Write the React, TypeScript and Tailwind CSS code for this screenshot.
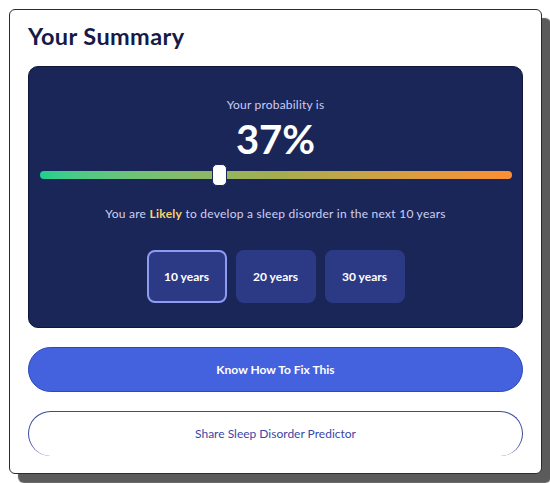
import { useState } from 'react'

const periods = ['10 years', '20 years', '30 years']

export default function App() {
  const [period, setPeriod] = useState('10 years')
  const probability = 37

  return (
    <div className="w-[550px] h-[483px] bg-white font-['Lato','Noto_Sans',sans-serif]">
      <div className="absolute left-[9px] top-[9px] w-[533px] h-[465px] rounded-[6px] border border-[#2b2b2b] bg-white shadow-[9px_9px_1px_#5b5b5b] px-[18px] pt-[12px]">
        <h1 className="text-[23.5px] leading-[28px] font-bold text-[#151a47] tracking-[0.4px]">Your Summary</h1>

        {/* Result panel */}
        <div className="mt-[16px] h-[262px] rounded-[10px] bg-[#1b2658] border border-[#10173a] flex flex-col items-center pt-[30px]">
          <p className="text-[12px] leading-[16px] text-[#c9cdf7] tracking-[0.2px]">Your probability is</p>
          <p className="mt-[4px] text-[40px] leading-[44px] font-bold text-white">{probability}%</p>

          <div className="relative mt-[10px] w-[472px] h-[8px] rounded-full bg-gradient-to-r from-[#1ccf8f] via-[#a4ad4f] to-[#fc8e33]">
            <div className="absolute left-[172px] top-[-7px] w-[15px] h-[22px] rounded-[5px] bg-white border border-[#1b2658]" />
          </div>

          <p className="mt-[27px] text-[12px] leading-[16px] text-[#cdd1f5] tracking-[0.25px]">
            You are <span className="font-bold text-[#f7d46c]">Likely</span> to develop a sleep disorder in the next 10 years
          </p>

          <div className="mt-[28px] flex gap-[9px]">
            {periods.map((p) => (
              <button
                key={p}
                onClick={() => setPeriod(p)}
                className={`w-[80px] h-[53px] rounded-[8px] text-[12px] font-bold text-white bg-[#2c3a85] ${
                  period === p ? 'border-2 border-[#8d9cf2]' : 'border-2 border-[#2c3a85]'
                }`}
              >
                {p}
              </button>
            ))}
          </div>
        </div>

        <button className="mt-[19px] w-full h-[45px] rounded-full bg-[#4461de] border border-[#2f48b8] text-[12px] font-bold text-white">
          Know How To Fix This
        </button>

        <button className="mt-[19px] w-full h-[45px] rounded-full bg-white border border-b-0 border-[#3c4a9e] text-[12px] text-[#3b45a8]">
          Share Sleep Disorder Predictor
        </button>
      </div>
    </div>
  )
}
